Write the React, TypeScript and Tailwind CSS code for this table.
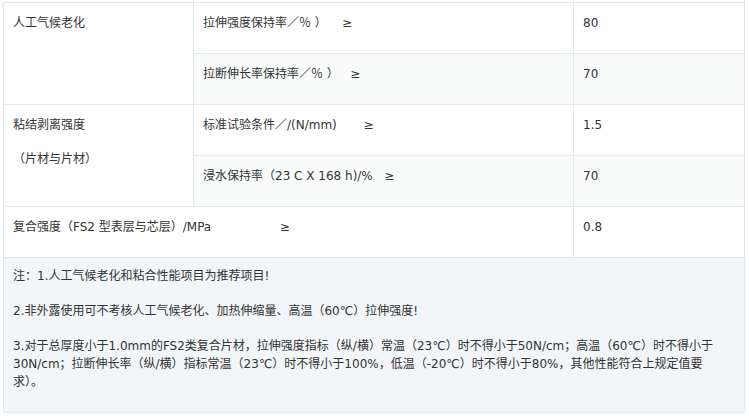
const cell = "border border-[#e3e8eb] align-top px-[9px] pt-[11px] pb-0 h-[51px]";

const Row = ({
  label,
  value,
  striped,
}: {
  label: string;
  value: string;
  striped?: boolean;
}) => (
  <>
    <td className={`${cell} whitespace-pre ${striped ? "bg-[#f9fbfb]" : ""}`}>{label}</td>
    <td className={`${cell} ${striped ? "bg-[#f9fbfb]" : ""}`}>{value}</td>
  </>
);

export default function App() {
  return (
    <div
      className="w-[749px] h-[416px] bg-white overflow-hidden pt-[1px] pl-[3px] text-[12px] leading-[18px] text-[#333]"
      style={{ fontFamily: '"DejaVu Sans", "Noto Sans CJK SC", sans-serif' }}
    >
      <table className="border-collapse w-[742px] table-fixed -mt-[1px]">
        <colgroup>
          <col className="w-[190px]" />
          <col className="w-[380px]" />
          <col className="w-[171px]" />
        </colgroup>
        <tbody>
          <tr>
            <td className="h-[2px] p-0 border-r border-b border-[#e3e8eb]" />
            <td className="h-[2px] p-0 border-r border-b border-[#e3e8eb]" />
            <td className="h-[2px] p-0 border-r border-b border-[#e3e8eb]" />
          </tr>
          <tr>
            <td rowSpan={2} className={cell}>
              人工气候老化
            </td>
            <Row label={"拉伸强度保持率／％ ）    ≥"} value="80" />
          </tr>
          <tr>
            <Row label={"拉断伸长率保持率／％ ）   ≥"} value="70" striped />
          </tr>
          <tr>
            <td rowSpan={2} className={cell}>
              <p>粘结剥离强度</p>
              <p className="mt-[16px]">（片材与片材）</p>
            </td>
            <Row label={"标准试验条件／/(N/mm)       ≥"} value="1.5" />
          </tr>
          <tr>
            <Row label={"浸水保持率（23 C X 168 h)/%   ≥"} value="70" striped />
          </tr>
          <tr>
            <td colSpan={2} className={`${cell} whitespace-pre`}>
              {"复合强度（FS2 型表层与芯层）/MPa                  ≥"}
            </td>
            <td className={cell}>0.8</td>
          </tr>
          <tr>
            <td colSpan={3} className="border border-[#e3e8eb] bg-[#f2f6f9] align-top px-[9px] pt-[9px] h-[155px]">
              <p>注：1.人工气候老化和粘合性能项目为推荐项目!</p>
              <p className="mt-[17px]">
                2.非外露使用可不考核人工气候老化、加热伸缩量、高温（60℃）拉伸强度!
              </p>
              <p className="mt-[17px] max-w-[711px]">
                3.对于总厚度小于1.0mm的FS2类复合片材，拉伸强度指标（纵/横）常温（23℃）时不得小于50N/cm；高温（60℃）时不得小于30N/cm；拉断伸长率（纵/横）指标常温（23℃）时不得小于100%，低温（-20℃）时不得小于80%，其他性能符合上规定值要求）。
              </p>
            </td>
          </tr>
        </tbody>
      </table>
    </div>
  );
}
